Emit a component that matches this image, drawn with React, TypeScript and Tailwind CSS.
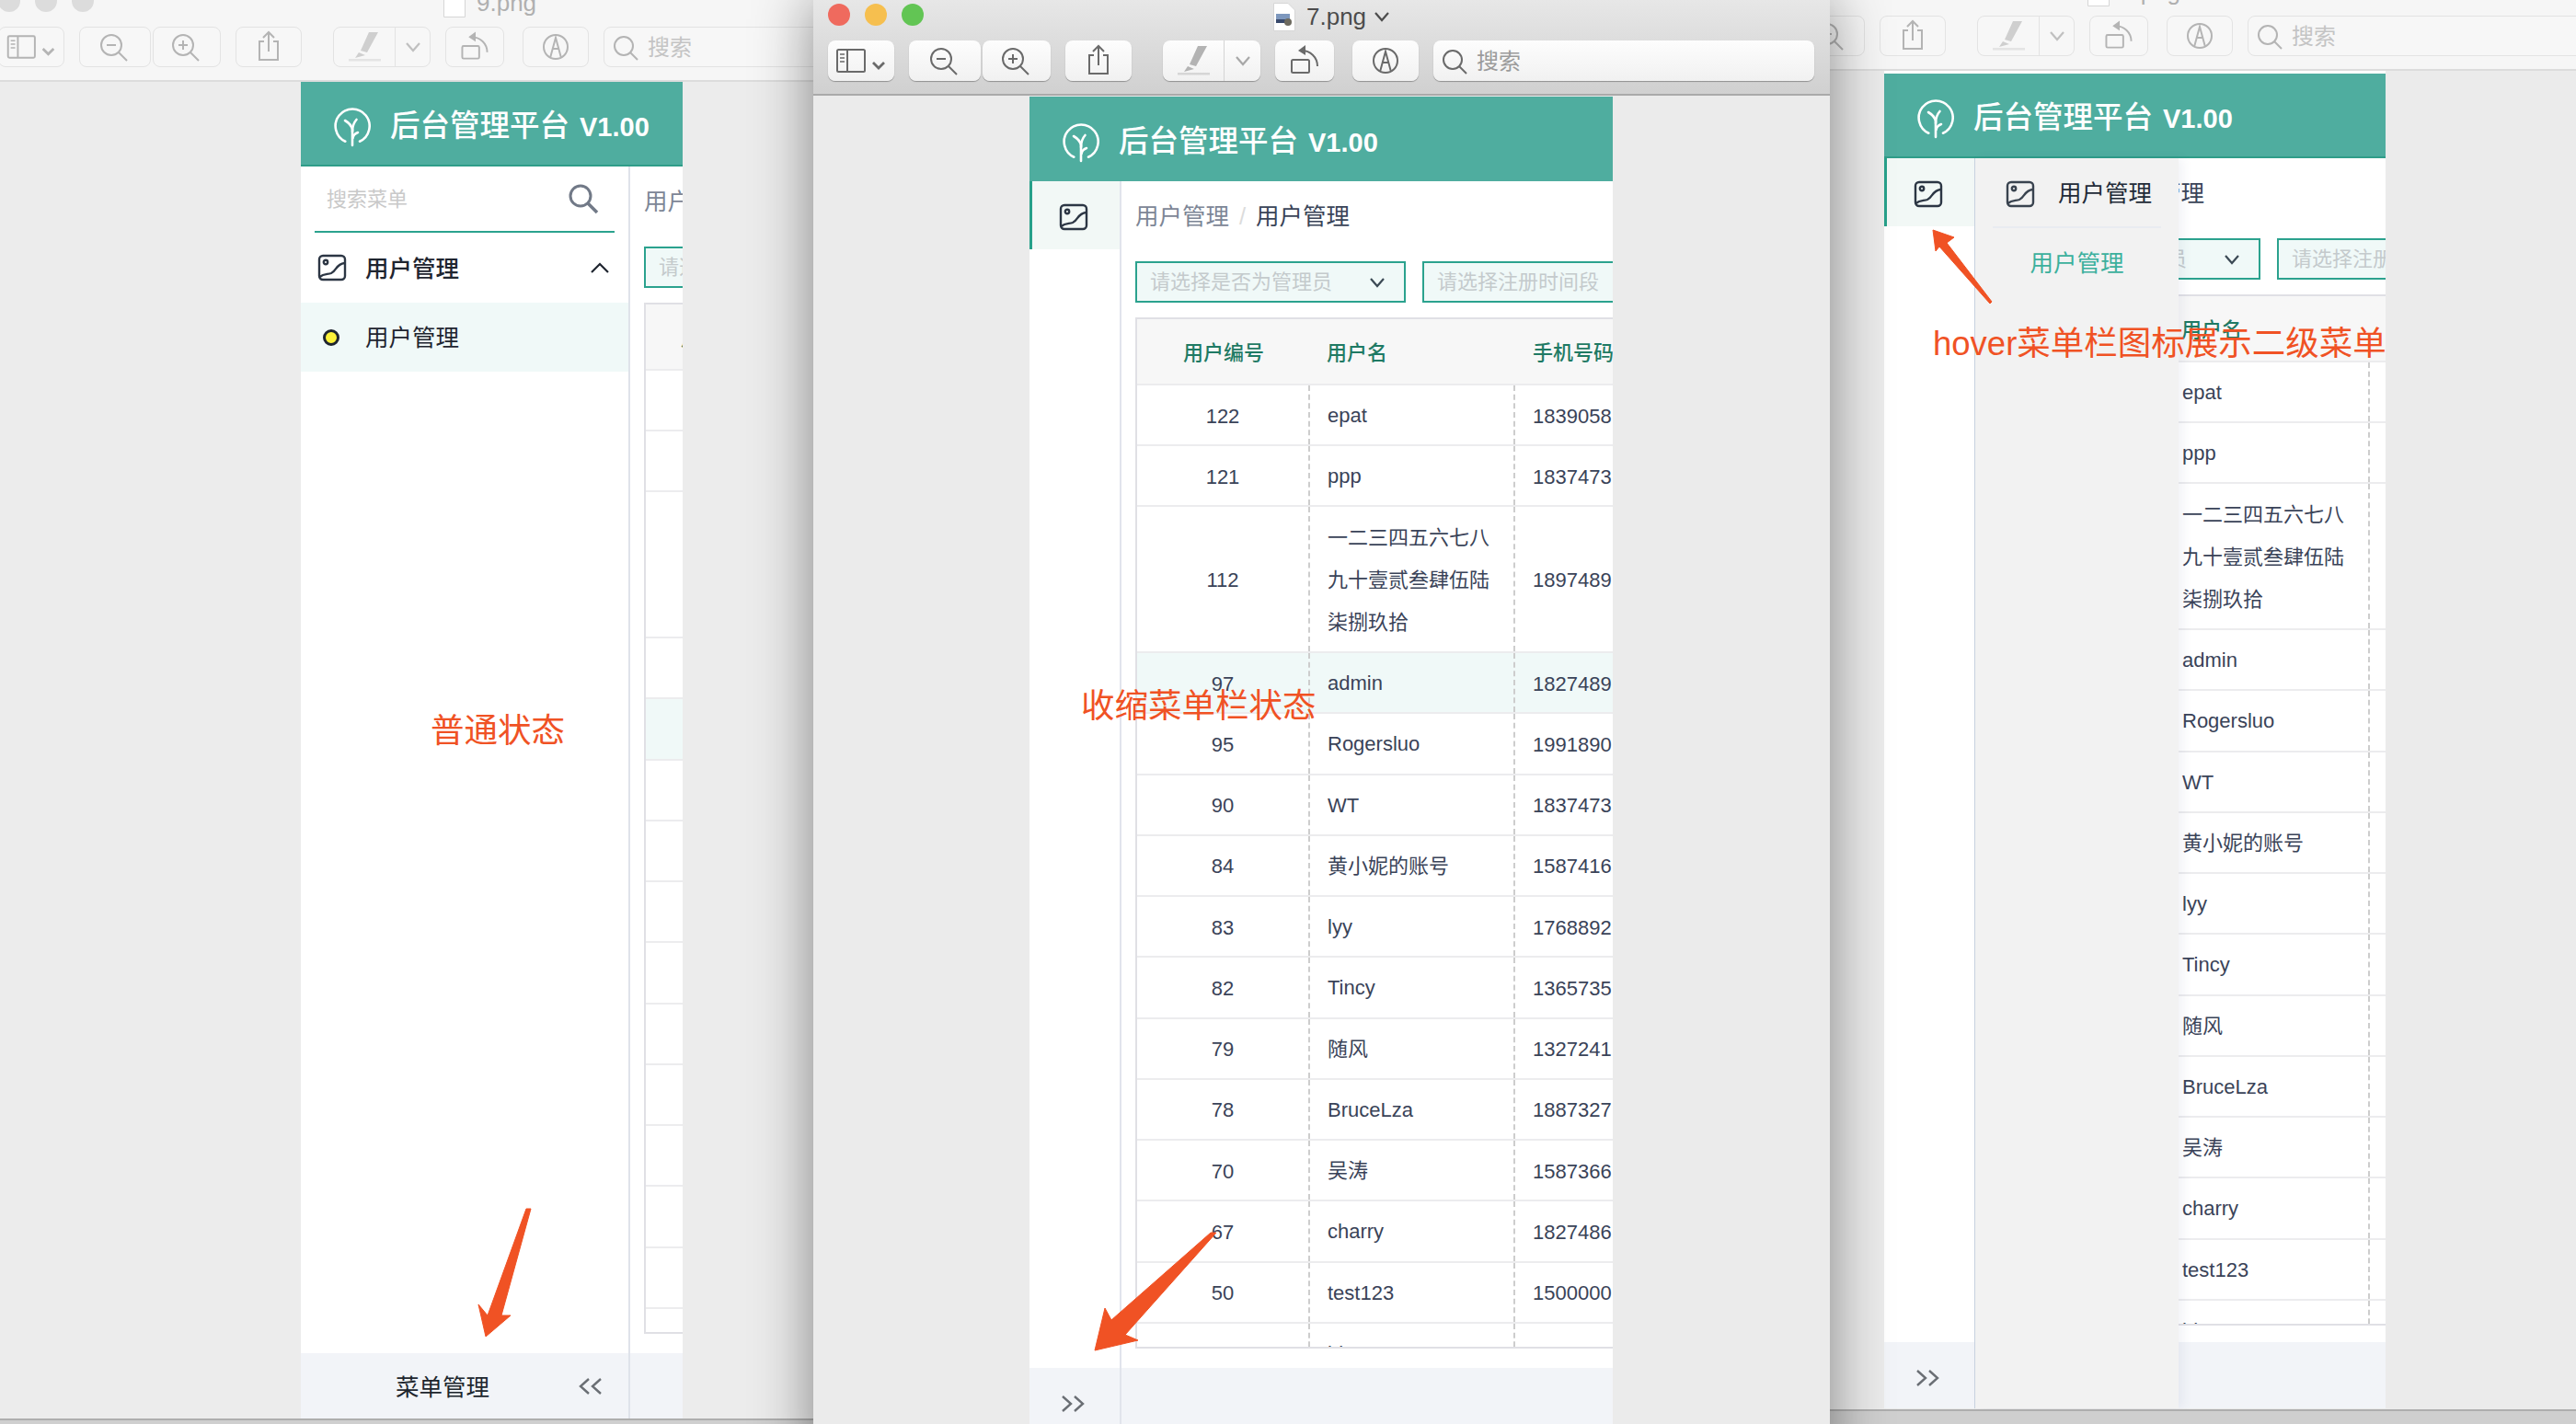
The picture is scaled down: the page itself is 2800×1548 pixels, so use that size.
import React from "react";

type Row = { id: string; name: string[]; phone: string; tall?: boolean };

const rows: Row[] = [
  { id: "122", name: ["epat"], phone: "1839058" },
  { id: "121", name: ["ppp"], phone: "1837473" },
  { id: "112", name: ["一二三四五六七八", "九十壹贰叁肆伍陆", "柒捌玖拾"], phone: "1897489", tall: true },
  { id: "97", name: ["admin"], phone: "1827489" },
  { id: "95", name: ["Rogersluo"], phone: "1991890" },
  { id: "90", name: ["WT"], phone: "1837473" },
  { id: "84", name: ["黄小妮的账号"], phone: "1587416" },
  { id: "83", name: ["lyy"], phone: "1768892" },
  { id: "82", name: ["Tincy"], phone: "1365735" },
  { id: "79", name: ["随风"], phone: "1327241" },
  { id: "78", name: ["BruceLza"], phone: "1887327" },
  { id: "70", name: ["吴涛"], phone: "1587366" },
  { id: "67", name: ["charry"], phone: "1827486" },
  { id: "50", name: ["test123"], phone: "1500000" },
  { id: "66", name: ["bluesat"], phone: "1887319" },
];

function TreeLogo() {
  return (
    <svg width="40" height="44" viewBox="0 0 40 44" fill="none" stroke="#fff" strokeWidth="2.6" strokeLinecap="round" className="shrink-0">
      <path d="M12.3 37.7 A18.5 18.5 0 1 1 28 37.7" />
      <path d="M20 42 V25 Q19 19 12 15" />
      <path d="M20 27 Q20 19 24.5 14" />
      <path d="M20.5 34 Q21 30 26 28" />
    </svg>
  );
}

function ImageIcon({ color = "#2c3644" }: { color?: string }) {
  return (
    <svg width="32" height="30" viewBox="0 0 32 30" fill="none" stroke={color} strokeWidth="2.4" className="shrink-0">
      <rect x="2" y="2" width="28" height="26" rx="4" />
      <circle cx="9" cy="9" r="2.2" />
      <path d="M2.5 25 C7 21 11 22.5 15 21 C21 18.5 20 11 29.5 10" />
    </svg>
  );
}

function Chevrons({ dir }: { dir: "left" | "right" }) {
  return (
    <svg width="28" height="20" viewBox="0 0 28 20" fill="none" stroke="#6a6e74" strokeWidth="2.4" className="shrink-0">
      {dir === "left" ? (
        <>
          <path d="M12 2 L3 10 L12 18" />
          <path d="M25 2 L16 10 L25 18" />
        </>
      ) : (
        <>
          <path d="M3 2 L12 10 L3 18" />
          <path d="M16 2 L25 10 L16 18" />
        </>
      )}
    </svg>
  );
}

function DownChevron({ color = "#3c4a55" }: { color?: string }) {
  return (
    <svg width="18" height="12" viewBox="0 0 18 12" fill="none" stroke={color} strokeWidth="2.2" className="shrink-0">
      <path d="M2 2 L9 10 L16 2" />
    </svg>
  );
}

function Table({ highlight, narrow }: { highlight: number; narrow: boolean }) {
  const idCol = narrow ? "w-[164px]" : "w-[188px]";
  return (
    <div className="mt-4 w-[800px] h-[1121px] overflow-hidden border-2 border-r-0 border-[#e0e0e5] bg-white text-[22px] text-[#3a4358]">
      <div className="flex h-[72px] items-center border-b-2 border-[#ececee] bg-[#f7f7f7] pt-[2px] font-medium text-[#1f7a64]">
        <div className={"shrink-0 text-center " + idCol}>用户编号</div>
        <div className="w-[223px] shrink-0 pl-[18px]">用户名</div>
        <div className="pl-[19px]">手机号码</div>
      </div>
      {rows.map((r, i) => (
        <div
          key={r.id}
          className={
            "flex border-b-2 border-[#ececee] " +
            (r.tall ? "h-[159px] " : i < 2 ? "h-[66px] " : "h-[66.25px] ") +
            (i === highlight ? "bg-[#f0f9f8]" : "bg-white")
          }
        >
          <div className={"flex shrink-0 items-center justify-center border-r-2 border-dashed border-[#cdcdcd] pt-[2px] " + idCol}>{r.id}</div>
          <div className="flex w-[223px] shrink-0 flex-col justify-center border-r-2 border-dashed border-[#cdcdcd] pl-[19px] pt-[2px] leading-[46px]">
            {r.name.map((n) => (
              <span key={n}>{n}</span>
            ))}
          </div>
          <div className="flex items-center pl-[19px] pt-[2px]">{r.phone}</div>
        </div>
      ))}
    </div>
  );
}

function Content({ highlight, narrow = false }: { highlight: number; narrow?: boolean }) {
  return (
    <div className="flex min-w-0 flex-1 flex-col overflow-hidden">
      <div className="min-h-0 flex-1 overflow-hidden pl-[15px]">
        <div className="flex h-[74px] items-center gap-[11px] whitespace-nowrap pt-[2px] text-[25.5px]">
          <span className="text-[#7d8696]">用户管理</span>
          <span className="text-[#dcdcdc]">/</span>
          <span className="text-[#3a4458]">用户管理</span>
        </div>
        <div className="mt-[13px] flex w-[800px] gap-[18px] text-[22px] text-[#c4cacc]">
          <div className="flex h-[45px] w-[294px] shrink-0 items-center justify-between border-2 border-[#2ba28e] bg-[#f0f9f8] pl-[14px] pr-5">
            <span>请选择是否为管理员</span>
            <DownChevron />
          </div>
          <div className="flex h-[45px] w-[350px] shrink-0 items-center border-2 border-[#2ba28e] bg-[#f0f9f8] pl-[14px]">
            <span>请选择注册时间段</span>
          </div>
        </div>
        <Table highlight={highlight} narrow={narrow} />
      </div>
      <div className="h-[72px] shrink-0 bg-[#f2f4f8]" />
    </div>
  );
}

function Header({ border }: { border: boolean }) {
  return (
    <div className={"flex h-[92px] shrink-0 items-center bg-[#4fad9f] pl-9 pt-[7px] " + (border ? "border-b-2 border-[#2f9d89]" : "")}>
      <TreeLogo />
      <div className="ml-[21px] flex items-baseline gap-[11px] whitespace-nowrap text-white">
        <span className="text-[32.5px] font-medium">后台管理平台</span>
        <span className="text-[29px] font-bold">V1.00</span>
      </div>
    </div>
  );
}

function OpenSidebar() {
  return (
    <div className="flex w-[358px] shrink-0 flex-col border-r-2 border-[#dfe3ea]">
      <div className="flex-1">
        <div className="mx-[15px] flex h-[72px] items-center justify-between border-b-2 border-[#2ba28e] pl-[13px] pr-[17px]">
          <span className="text-[22px] text-[#c9c9c9]">搜索菜单</span>
          <svg width="34" height="34" viewBox="0 0 34 34" fill="none" stroke="#717987" strokeWidth="3" className="shrink-0">
            <circle cx="14" cy="14" r="11" />
            <path d="M22 22 L32 32" strokeWidth="3.6" />
          </svg>
        </div>
        <div className="flex h-[76px] items-center pl-[18px] pr-[20px]">
          <ImageIcon />
          <span className="ml-5 flex-1 pt-[2px] text-[25.5px] font-medium text-[#1f2530]">用户管理</span>
          <svg width="22" height="12" viewBox="0 0 22 12" fill="none" stroke="#1f2530" strokeWidth="2.2" className="shrink-0">
            <path d="M2 11 L11 2 L20 11" />
          </svg>
        </div>
        <div className="flex h-[75px] items-center bg-[#f0f9f8] pl-6">
          <div className="h-[18px] w-[18px] rounded-full border-[3.5px] border-[#1e2530] bg-[#fbf23a]" />
          <span className="ml-7 pt-[2px] text-[25.5px] text-[#1f2530]">用户管理</span>
        </div>
      </div>
      <div className="flex h-[72px] shrink-0 items-center bg-[#f2f4f8] pl-[103px]">
        <span className="w-[104px] pt-[2px] text-[25.5px] text-[#20262e]">菜单管理</span>
        <span className="ml-[94px]">
          <Chevrons dir="left" />
        </span>
      </div>
    </div>
  );
}

function Rail({ borderColor }: { borderColor: string }) {
  return (
    <div className={"flex w-[100px] shrink-0 flex-col border-r-2 " + borderColor}>
      <div className="flex-1">
        <div className="flex h-[74px] items-center justify-center border-l-[3px] border-[#27a08a] bg-[#f2f8f6] pr-[5px] pt-[3px]">
          <ImageIcon />
        </div>
      </div>
      <div className="flex h-[72px] shrink-0 items-center justify-center bg-[#f2f4f8] pt-[5px] pr-[4px]">
        <Chevrons dir="right" />
      </div>
    </div>
  );
}

function Flyout() {
  return (
    <div className="absolute bottom-0 left-[99px] top-[95px] w-[221px] bg-[#f2f2f2] shadow-[5px_0_10px_rgba(70,80,140,0.07)]">
      <div className="flex h-[74px] items-center pl-[33px] pt-[3px]">
        <ImageIcon color="#39434f" />
        <span className="ml-[25px] text-[25.5px] text-[#232b38]">用户管理</span>
      </div>
      <div className="mx-[19px] h-[2px] bg-[#e9ebf1]" />
      <div className="mt-[18px] text-center text-[25.5px] leading-[40px] text-[#3cb09d]">用户管理</div>
    </div>
  );
}

function Btn({ cls, active, children }: { cls: string; active: boolean; children: React.ReactNode }) {
  return (
    <div
      className={
        "flex h-[44px] shrink-0 items-center justify-center rounded-[8px] " +
        (active
          ? "bg-gradient-to-b from-[#fdfdfd] to-[#f1f1f1] shadow-[0_1px_1px_rgba(0,0,0,0.32)] "
          : "border border-[#e3e3e3] bg-[#f7f7f7] ") +
        cls
      }
    >
      {children}
    </div>
  );
}

function Toolbar({ active, searchCls }: { active: boolean; searchCls: string }) {
  const s = active ? "#6a6a6a" : "#b4b4b4";
  const pen = active ? "#b3b3b3" : "#cfcfcf";
  const penLine = active ? "#d6d6d6" : "#e4e4e4";
  return (
    <div className="ml-4 mt-2 flex h-[44px]">
      <Btn cls="w-[72px]" active={active}>
        <svg width="72" height="44" viewBox="0 0 72 44" fill="none" stroke={s} strokeWidth="2">
          <rect x="10" y="10" width="30" height="24" rx="1.5" />
          <path d="M21 10 V34" />
          <path d="M13 15 H18 M13 19 H18 M13 23 H18" strokeWidth="1.6" />
          <path d="M49 24 L55 30 L61 24" strokeWidth="2.8" />
        </svg>
      </Btn>
      <Btn cls="ml-4 w-[78px]" active={active}>
        <svg width="44" height="44" viewBox="0 0 44 44" fill="none" stroke={s} strokeWidth="2">
          <circle cx="18" cy="20" r="11" />
          <path d="M13 20 H23" />
          <path d="M26 28 L35 37" />
        </svg>
      </Btn>
      <Btn cls="ml-[2px] w-[74px]" active={active}>
        <svg width="44" height="44" viewBox="0 0 44 44" fill="none" stroke={s} strokeWidth="2">
          <circle cx="18" cy="20" r="11" />
          <path d="M13 20 H23 M18 15 V25" />
          <path d="M26 28 L35 37" />
        </svg>
      </Btn>
      <Btn cls="ml-4 w-[72px]" active={active}>
        <svg width="44" height="44" viewBox="0 0 44 44" fill="none" stroke={s} strokeWidth="2">
          <path d="M17 16 H12 V36 H32 V16 H27" />
          <path d="M22 27 V6 M16 12 L22 6 L28 12" />
        </svg>
      </Btn>
      <Btn cls="ml-[34px] w-[106px]" active={active}>
        <svg width="66" height="44" viewBox="0 0 66 44" className="shrink-0">
          <path d="M38 6 H48 L36 28 L29 26 Z M27 28 L34 31 L23 34 Z" fill={pen} />
          <rect x="16" y="35" width="35" height="2.5" fill={penLine} />
        </svg>
        <div className={"h-[44px] w-px " + (active ? "bg-[#d4d4d4]" : "bg-[#e3e3e3]")} />
        <div className="flex flex-1 justify-center">
          <DownChevron color={active ? "#a8a8a8" : "#c0c0c0"} />
        </div>
      </Btn>
      <Btn cls="ml-4 w-[64px]" active={active}>
        <svg width="64" height="44" viewBox="0 0 64 44" fill="none" stroke={s} strokeWidth="2">
          <rect x="18" y="21" width="19" height="14" rx="1.5" />
          <path d="M46 28 C46 18 38 11 29 11" />
          <path d="M33 5 L25 11 L33 16 Z" fill={s} stroke="none" />
        </svg>
      </Btn>
      <Btn cls="ml-5 w-[72px]" active={active}>
        <svg width="44" height="44" viewBox="0 0 44 44" fill="none" stroke={s} strokeWidth="2">
          <circle cx="22" cy="22" r="13" />
          <path d="M16 34 L22 12 L28 34" />
          <path d="M19 24 H25" />
        </svg>
      </Btn>
      <Btn cls={"ml-4 justify-start " + searchCls} active={active}>
        <svg width="44" height="44" viewBox="0 0 44 44" fill="none" stroke={s} strokeWidth="2" className="shrink-0">
          <circle cx="21" cy="21" r="10" />
          <path d="M28 28 L36 36" />
        </svg>
        <span className={"ml-[3px] pt-[2px] text-[24px] " + (active ? "text-[#9b9b9b]" : "text-[#c4c4c4]")}>搜索</span>
      </Btn>
    </div>
  );
}

function Lights({ active }: { active: boolean }) {
  return (
    <div className="mb-1 flex w-[500px] shrink-0 gap-4 pl-4">
      <div className={"h-6 w-6 rounded-full " + (active ? "bg-[#ef6a5e]" : "bg-[#dcdcdc]")} />
      <div className={"h-6 w-6 rounded-full " + (active ? "bg-[#f6bf4f]" : "bg-[#dcdcdc]")} />
      <div className={"h-6 w-6 rounded-full " + (active ? "bg-[#62c554]" : "bg-[#dcdcdc]")} />
    </div>
  );
}

function FileIcon({ active }: { active: boolean }) {
  return (
    <svg width="24" height="31" viewBox="0 0 24 31" className="shrink-0">
      <path d="M0.5 0.5 H16 L23.5 8 V30.5 H0.5 Z" fill="#fff" stroke="#d6d6d6" />
      {active && (
        <>
          <rect x="3" y="12" width="15" height="10" fill="#7d97bd" />
          <rect x="3" y="18" width="15" height="4" fill="#394a6c" />
          <circle cx="16" cy="21" r="4" fill="#6d6a5f" />
        </>
      )}
    </svg>
  );
}

function Chrome({ title, active, searchCls }: { title: string; active: boolean; searchCls: string }) {
  return (
    <div
      className={
        "h-[104px] shrink-0 border-b-2 " +
        (active ? "border-[#a9a9a9] bg-gradient-to-b from-[#e7e7e7] to-[#d0d0d0]" : "border-[#dcdcdc] bg-[#f6f6f6]")
      }
    >
      <div className="flex h-9 items-center">
        <Lights active={active} />
        <FileIcon active={active} />
        <span className={"ml-3 text-[26px] " + (active ? "text-[#4c4c4c]" : "text-[#b0b0b0]")}>{title}</span>
        {active && (
          <span className="ml-2">
            <DownChevron color="#4c4c4c" />
          </span>
        )}
      </div>
      <Toolbar active={active} searchCls={searchCls} />
    </div>
  );
}

function Arrow({ cls, w, h, points }: { cls: string; w: number; h: number; points: string }) {
  return (
    <svg width={w} height={h} viewBox={`0 0 ${w} ${h}`} className={"pointer-events-none absolute z-30 " + cls}>
      <polygon points={points} fill="#f05224" stroke="#f05224" strokeWidth="1" strokeLinejoin="round" />
    </svg>
  );
}

export default function App() {
  return (
    <div className="relative h-[1548px] w-[2800px] overflow-hidden bg-[#cfcfcf] font-['Liberation_Sans','Noto_Sans_CJK_SC',sans-serif]">
      {/* left window */}
      <div className="absolute left-[-18px] top-[-15px] flex h-[1559px] w-[904px] flex-col border-b-2 border-[#aeaeae] bg-[#ececec]">
        <Chrome title="9.png" active={false} searchCls="w-[500px]" />
        <div className="flex-1 overflow-hidden pl-[345px]">
          <div className="flex h-[1454px] w-[415px] flex-col bg-white">
            <Header border />
            <div className="flex min-h-0 flex-1">
              <OpenSidebar />
              <Content highlight={4} narrow />
            </div>
          </div>
        </div>
      </div>

      {/* right window */}
      <div className="absolute left-[1769px] top-[-27px] flex h-[1561px] w-[1040px] flex-col border-b-2 border-[#aeaeae] bg-[#ebebeb]">
        <Chrome title="8.png" active={false} searchCls="w-[600px]" />
        <div className="flex-1 overflow-hidden pl-[279px]">
          <div className="relative flex h-[1454px] w-[545px] flex-col bg-white pt-[3px]">
            <Header border />
            <div className="flex min-h-0 flex-1">
              <Rail borderColor="border-[#c9d3e0]" />
              <Content highlight={-1} />
            </div>
            <Flyout />
          </div>
        </div>
      </div>

      {/* middle window */}
      <div className="absolute left-[884px] top-0 z-10 flex h-[1600px] w-[1105px] flex-col bg-[#ebebeb] shadow-[0_0_60px_rgba(0,0,0,0.45)]">
        <Chrome title="7.png" active searchCls="w-[414px]" />
        <div className="flex-1 overflow-hidden pl-[235px] pt-px">
          <div className="flex h-[1454px] w-[634px] flex-col bg-white">
            <Header border={false} />
            <div className="flex min-h-0 flex-1">
              <Rail borderColor="border-[#e1e4ec]" />
              <Content highlight={3} />
            </div>
          </div>
        </div>
      </div>

      {/* annotations */}
      <span className="absolute left-[468px] top-[774px] z-30 text-[36.5px] leading-[42px] text-[#f05224]">普通状态</span>
      <span className="absolute left-[1175px] top-[747px] z-30 text-[36.5px] leading-[42px] text-[#f05224]">收缩菜单栏状态</span>
      <span className="absolute left-[2101px] top-[353px] z-30 whitespace-nowrap text-[36.5px] leading-[42px] text-[#f05224]">hover菜单栏图标展示二级菜单</span>

      <Arrow cls="left-[515px] top-[1310px]" w={65} h={146} points="57,4 62,4 30,120 40,120 13,143 5,108 15,120" />
      <Arrow cls="left-[1186px] top-[1335px]" w={140} h={136} points="130,5 136,5 37,116 51,122 4,133 15,87 22,100" />
      <Arrow cls="left-[2097px] top-[246px]" w={72} h={88} points="4,4 27,12 19,18 68,82 66,84 11,22 7,27" />
    </div>
  );
}
